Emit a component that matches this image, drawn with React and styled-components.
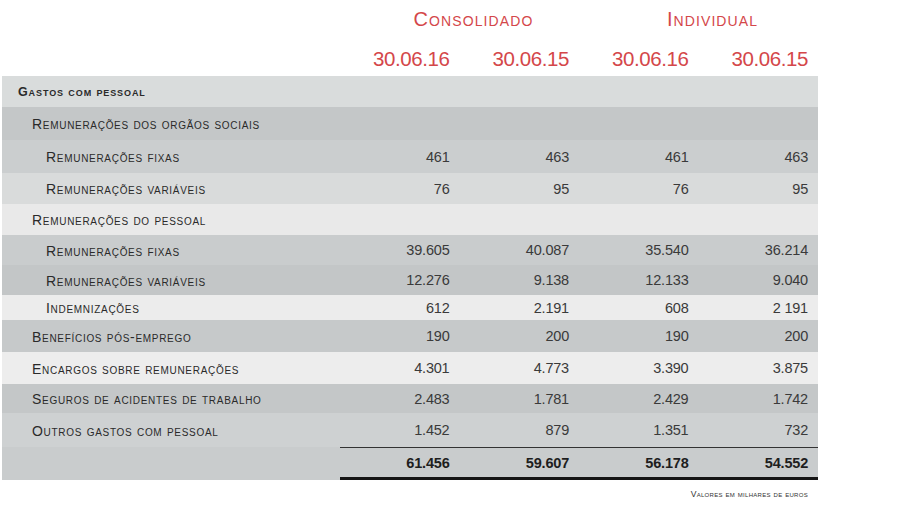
import React from "react";
import styled, { createGlobalStyle } from "styled-components";

const Global = createGlobalStyle`
  html, body { margin: 0; padding: 0; background: #ffffff; }
  body { font-family: "Liberation Sans", Arial, sans-serif; }
`;

const Page = styled.div`
  width: 920px;
  height: 518px;
  padding-left: 2px;
  box-sizing: border-box;
  background: #fff;
`;

const Table = styled.div`
  width: 816px;
  display: flex;
  flex-direction: column;
`;

const HeadRow = styled.div`
  display: grid;
  grid-template-columns: 338px repeat(4, 119.5px);
  height: ${(p) => p.$h}px;
  align-items: center;
`;

const GroupTitle = styled.div`
  grid-column: span 2;
  padding: 0 10px 0 38px;
  text-align: center;
  color: #d4474a;
  font-size: 20px;
  font-variant: small-caps;
  letter-spacing: 1.1px;
  line-height: 1;
`;

const DateCell = styled.div`
  padding-right: 10px;
  text-align: right;
  color: #d4474a;
  font-size: 20.5px;
  letter-spacing: -0.4px;
  line-height: 1;
  padding-top: 4px;
`;

const Row = styled.div`
  display: grid;
  grid-template-columns: 338px repeat(4, 119.5px);
  height: ${(p) => p.$h}px;
  background: ${(p) => p.$bg};
  align-items: stretch;
`;

const Label = styled.div`
  display: flex;
  align-items: center;
  padding-left: ${(p) => [16, 30, 44][p.$level]}px;
  padding-top: 1px;
  color: #2a2a2a;
  font-variant: small-caps;
  font-size: ${(p) => (p.$bold ? 12.5 : 14)}px;
  font-weight: ${(p) => (p.$bold ? 700 : 400)};
  letter-spacing: ${(p) => (p.$bold ? 0.9 : 0.7)}px;
  white-space: nowrap;
`;

const Value = styled.div`
  display: flex;
  align-items: center;
  justify-content: flex-end;
  padding-right: 10px;
  color: ${(p) => (p.$total ? "#1e1e1e" : "#3a3a3a")};
  font-size: 14.5px;
  font-weight: ${(p) => (p.$total ? 700 : 400)};
  letter-spacing: -0.2px;
  box-sizing: border-box;
  ${(p) =>
    p.$total &&
    `
    border-top: 1.5px solid #333;
    border-bottom: 3px solid #151515;
  `}
`;

const Note = styled.div`
  width: 816px;
  box-sizing: border-box;
  padding-right: 10px;
  margin-top: 9px;
  text-align: right;
  color: #333;
  font-size: 8.6px;
  font-variant: small-caps;
  letter-spacing: 0.3px;
  line-height: 10px;
`;

const rows = [
  { label: "Gastos com pessoal", level: 0, bold: true, h: 31, bg: "#d9dcdc" },
  { label: "Remunerações dos orgãos sociais", level: 1, h: 33, bg: "#c4c7c8" },
  { label: "Remunerações fixas", level: 2, h: 33, bg: "#cbcecf", v: ["461", "463", "461", "463"] },
  { label: "Remunerações variáveis", level: 2, h: 31, bg: "#d9dbdb", v: ["76", "95", "76", "95"] },
  { label: "Remunerações do pessoal", level: 1, h: 31, bg: "#e9e9e9" },
  { label: "Remunerações fixas", level: 2, h: 30, bg: "#c9cccd", v: ["39.605", "40.087", "35.540", "36.214"] },
  { label: "Remunerações variáveis", level: 2, h: 30, bg: "#c3c6c7", v: ["12.276", "9.138", "12.133", "9.040"] },
  { label: "Indemnizações", level: 2, h: 25, bg: "#ececec", v: ["612", "2.191", "608", "2 191"] },
  { label: "Benefícios pós-emprego", level: 1, h: 32, bg: "#c6c9ca", v: ["190", "200", "190", "200"] },
  { label: "Encargos sobre remunerações", level: 1, h: 32, bg: "#ededed", v: ["4.301", "4.773", "3.390", "3.875"] },
  { label: "Seguros de acidentes de trabalho", level: 1, h: 29, bg: "#c4c7c8", v: ["2.483", "1.781", "2.429", "1.742"] },
  { label: "Outros gastos com pessoal", level: 1, h: 34, bg: "#ced1d2", v: ["1.452", "879", "1.351", "732"] },
];

const totals = ["61.456", "59.607", "56.178", "54.552"];

export default function App() {
  return (
    <Page>
      <Global />
      <Table>
        <HeadRow $h={38}>
          <div />
          <GroupTitle>Consolidado</GroupTitle>
          <GroupTitle>Individual</GroupTitle>
        </HeadRow>
        <HeadRow $h={38}>
          <div />
          <DateCell>30.06.16</DateCell>
          <DateCell>30.06.15</DateCell>
          <DateCell>30.06.16</DateCell>
          <DateCell>30.06.15</DateCell>
        </HeadRow>
        {rows.map((r, i) => (
          <Row key={i} $h={r.h} $bg={r.bg}>
            <Label $level={r.level} $bold={r.bold}>
              {r.label}
            </Label>
            {(r.v || ["", "", "", ""]).map((v, j) => (
              <Value key={j}>{v}</Value>
            ))}
          </Row>
        ))}
        <Row $h={33} $bg="#c9cccd">
          <Label $level={1} />
          {totals.map((v, j) => (
            <Value key={j} $total>
              {v}
            </Value>
          ))}
        </Row>
      </Table>
      <Note>Valores em milhares de euros</Note>
    </Page>
  );
}
